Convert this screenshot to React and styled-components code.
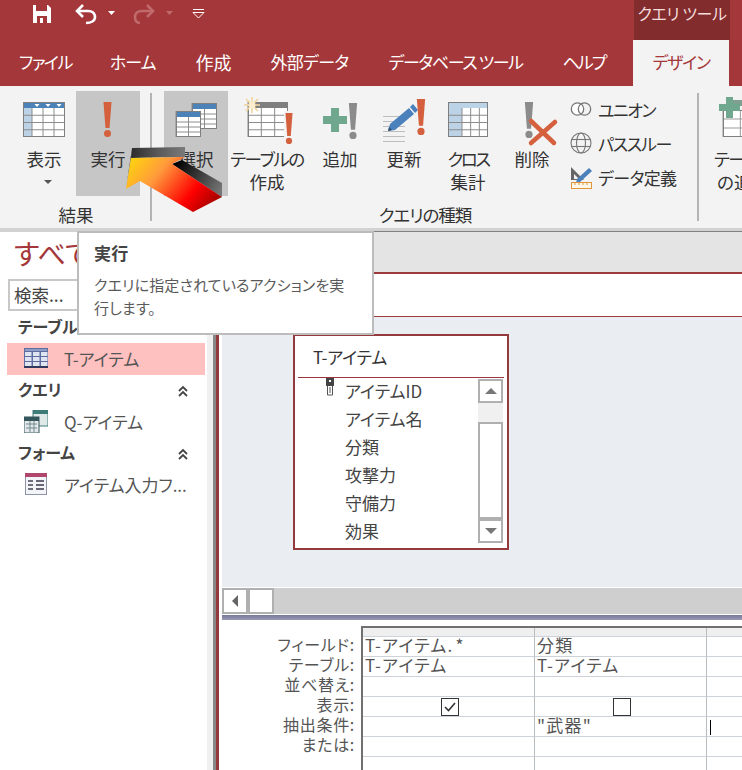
import styled, { createGlobalStyle } from "styled-components";

const RED = "#a4373a";
const ORANGE = "#d4603e";
const BLUE = "#4d82b8";
const PALE = "#bcd2e6";
const LINE = "#7f7f7f";

const GlobalStyle = createGlobalStyle`
  html, body { margin: 0; padding: 0; background: #fff; }
  body {
    font-family: "Noto Sans CJK JP", "Noto Sans", sans-serif;
    font-feature-settings: "palt";
    color: #333;
  }
`;

const Page = styled.div`
  position: relative;
  width: 742px;
  height: 770px;
  overflow: hidden;
`;

// kana in the original font runs narrower than Noto, so labels get tracked in
const Tight = styled.span`
  letter-spacing: ${(p) => p.$t}px;
`;

/* title + tabs */
const TitleBar = styled.div`
  display: flex;
  height: 40px;
  background: ${RED};
`;
const Qat = styled.div`
  display: flex;
  align-items: center;
  height: 27px;
  padding-left: 32px;
`;
const ContextHead = styled.div`
  margin-left: auto;
  margin-right: 12px;
  width: 96px;
  height: 40px;
  background: #832c2e;
  color: #f3dcdc;
  font-size: 16px;
  line-height: 26px;
  letter-spacing: -0.4px;
  text-align: center;
  white-space: nowrap;
`;
const TabRow = styled.div`
  display: flex;
  height: 46px;
  background: ${RED};
  white-space: nowrap;
`;
const Tab = styled.div`
  padding: 0 ${(p) => p.$pr || 20}px 0 ${(p) => p.$pl || 20}px;
  margin-left: ${(p) => p.$ml || 0}px;
  font-size: ${(p) => (p.$kanji ? 18 : 17)}px;
  letter-spacing: ${(p) => p.$t || 0}px;
  line-height: 44px;
  color: ${(p) => (p.$active ? RED : "#fff")};
  background: ${(p) => (p.$active ? "#f3f3f3" : "transparent")};
`;

/* ribbon */
const Ribbon = styled.div`
  display: flex;
  height: 137px;
  padding: 5px 0 0 12px;
  background: #f3f3f3;
  border-bottom: 4px solid #d2d2d2;
  overflow: hidden;
`;
const Group = styled.div`
  display: flex;
  flex-direction: column;
  flex: none;
`;
const GroupBody = styled.div`
  display: flex;
  height: 105px;
`;
const GroupLabel = styled.div`
  text-align: center;
  font-size: 17.5px;
  line-height: 24px;
  margin-top: 7px;
  padding-right: ${(p) => p.$shift || 0}px;
  letter-spacing: ${(p) => p.$t || 0}px;
  color: #333;
`;
const Separator = styled.div`
  flex: none;
  width: 2px;
  height: 128px;
  margin: 2px ${(p) => p.$right}px 0 ${(p) => p.$left}px;
  background: #b4b4b4;
`;
const RibbonButton = styled.div`
  flex: none;
  width: ${(p) => p.$w}px;
  background: ${(p) => (p.$on ? "#c6c6c6" : "transparent")};
  text-align: center;
  font-size: 17.5px;
  line-height: 23px;
  color: #333;
  white-space: nowrap;
  svg { display: block; }
`;
const SmallList = styled.div`
  display: flex;
  flex-direction: column;
  gap: 8px;
  margin-left: 8px;
  padding-top: 5px;
  width: 128px;
`;
const SmallItem = styled.div`
  display: flex;
  align-items: center;
  gap: 6px;
  height: 26px;
  font-size: 17px;
  color: #333;
  white-space: nowrap;
`;
const DropCaret = styled.div`
  width: 0;
  height: 0;
  margin: 10px 0 0 32px;
  border-left: 4px solid transparent;
  border-right: 4px solid transparent;
  border-top: 4px solid #555;
`;

/* main */
const Main = styled.div`
  display: flex;
  height: 538px;
`;
const NavPane = styled.div`
  flex: none;
  width: 207px;
  background: #fff;
`;
const NavTitle = styled.div`
  height: 47px;
  padding-left: 14px;
  font-size: 28px;
  line-height: 42px;
  color: ${RED};
`;
const SearchBox = styled.div`
  box-sizing: border-box;
  height: 32px;
  margin: 0 0 1px 8px;
  padding-left: 4px;
  border: 2px solid #c8c8c8;
  font-size: 17.5px;
  line-height: 27px;
  color: #444;
`;
const NavHeader = styled.div`
  display: flex;
  align-items: center;
  justify-content: space-between;
  box-sizing: border-box;
  height: 31px;
  padding: 0 18px 3px;
  font-size: 16px;
  font-weight: 700;
  color: #444;
`;
const Collapse = styled.svg`
  margin-top: 4px;
`;
const NavRow = styled.div`
  display: flex;
  align-items: center;
  gap: 16px;
  box-sizing: border-box;
  height: 32px;
  margin: 0 2px 0 7px;
  padding: 0 0 2px 17px;
  background: ${(p) => (p.$on ? "#ffc0c0" : "transparent")};
  font-size: 17px;
  color: #555;
  white-space: nowrap;
`;
const PaneEdge = styled.div`
  flex: none;
  width: 12px;
  box-sizing: border-box;
  background: #f0f0f0;
  border-right: 3px solid #943a3c;
  box-shadow: inset -3px 0 0 #888;
`;
const Designer = styled.div`
  flex: 1;
  display: flex;
  flex-direction: column;
  min-width: 0;
  background: #fff;
`;
const DocStrip = styled.div`
  height: 40px;
  background: #e4e4e4;
  border-top: 1px solid #808080;
  margin-top: -1px;
`;
const DocBar = styled.div`
  height: 42px;
  border-top: 2px solid #9c3b3d;
  border-bottom: 1px solid #9c3b3d;
`;
const Canvas = styled.div`
  height: 253px;
  margin-left: 3px;
  padding: 17px 0 0 71px;
  background: #eaedf1;
`;
const TableBox = styled.div`
  box-sizing: border-box;
  width: 216px;
  height: 216px;
  background: #fff;
  border: 2px solid #943a3c;
`;
const BoxTitle = styled.div`
  height: 42px;
  margin: 0 3px;
  padding-left: 15px;
  box-sizing: border-box;
  border-bottom: 1px solid #943a3c;
  font-size: 17px;
  letter-spacing: -0.2px;
  line-height: 41px;
  color: #333;
`;
const BoxBody = styled.div`
  display: flex;
  justify-content: space-between;
  padding: 1px 4px 0 0;
`;
const FieldList = styled.div`
  margin-top: -2px;
`;
const FieldRow = styled.div`
  display: flex;
  height: 28px;
  padding-left: 50px;
  font-size: 17px;
  line-height: 28px;
  color: #444;
  position: relative;
`;
const KeyMark = styled.svg`
  position: absolute;
  left: 31px;
  top: 1px;
`;
const VScroll = styled.div`
  display: flex;
  flex-direction: column;
  width: 25px;
  height: 164px;
`;
const ScrollCap = styled.div`
  box-sizing: border-box;
  height: ${(p) => p.$h}px;
  flex: none;
  background: #fff;
  border: 2px solid #b0b0b0;
  display: flex;
  align-items: center;
  justify-content: center;
`;
const ScrollTrack = styled.div`
  height: ${(p) => p.$h}px;
  flex: none;
  background: #f0f0f0;
`;
const TriUp = styled.div`
  width: 0;
  height: 0;
  border-left: 6px solid transparent;
  border-right: 6px solid transparent;
  border-bottom: 6px solid #777;
`;
const TriDown = styled(TriUp)`
  border-bottom: 0;
  border-top: 6px solid #777;
`;
const TriLeft = styled.div`
  width: 0;
  height: 0;
  border-top: 6px solid transparent;
  border-bottom: 6px solid transparent;
  border-right: 6px solid #666;
`;
const HScroll = styled.div`
  display: flex;
  box-sizing: border-box;
  height: 27px;
  margin-left: 3px;
  border-top: 1px solid #fff;
  background: #cfcfcf;
`;
const HScrollButtons = styled.div`
  display: flex;
  gap: 4px;
  box-sizing: border-box;
  height: 26px;
  padding: 2px;
  background: #b0b0b0;
`;
const HCap = styled.div`
  width: 22px;
  background: #fff;
  display: flex;
  align-items: center;
  justify-content: center;
`;
const Splitter = styled.div`
  height: 5px;
  margin: 1px 0 0 3px;
  background: linear-gradient(#77779a, #9a9ab4);
`;
const Lower = styled.div`
  display: flex;
  flex: 1;
  padding-top: 6px;
  overflow: hidden;
`;
const RowLabels = styled.div`
  flex: none;
  width: 136px;
  padding-top: 8px;
  text-align: right;
  font-size: 16px;
  letter-spacing: 0.7px;
  line-height: 20px;
  color: #555;
`;
const Grid = styled.div`
  margin-left: 6px;
  display: grid;
  grid-template-columns: 172px 172px 60px;
  grid-auto-rows: 20px;
  grid-template-rows: 9px;
  border-top: 2px solid #707070;
  border-left: 2px solid #707070;
`;
const Cell = styled.div`
  box-sizing: border-box;
  position: relative;
  border-right: 1px solid #b8bdc2;
  border-bottom: 1px solid #cdd3d9;
  padding-left: 2px;
  font-size: 17px;
  letter-spacing: 1.2px;
  line-height: 16px;
  color: #555;
  white-space: nowrap;
  background: ${(p) => (p.$head ? "#efefef" : "#fff")};
  display: ${(p) => (p.$center ? "flex" : "block")};
  align-items: center;
  justify-content: center;
`;
const CheckBox = styled.div`
  box-sizing: border-box;
  width: 18px;
  height: 18px;
  border: 1px solid #333;
  display: flex;
  align-items: center;
  justify-content: center;
`;
const Caret = styled.div`
  width: 1px;
  height: 15px;
  margin: 3px 0 0 1px;
  background: #000;
`;

/* overlays */
const Tooltip = styled.div`
  position: absolute;
  left: 77px;
  top: 231px;
  box-sizing: border-box;
  width: 297px;
  height: 104px;
  padding: 8px 15px;
  background: #fff;
  border: 2px solid #bcbcbc;
  font-size: 15px;
  letter-spacing: 0.15px;
  color: #5a5a5a;
  line-height: 23px;
  white-space: nowrap;
`;
const TipTitle = styled.div`
  font-size: 17px;
  font-weight: 700;
  color: #444;
  margin-bottom: 9px;
`;
const Arrow = styled.svg`
  position: absolute;
  left: 120px;
  top: 140px;
`;

const Bang = ({ x, y, h = 35, color = ORANGE }) => {
  const w = h * 0.23;
  const bar = h * 0.74;
  return (
    <>
      <polygon points={`${x - w / 2},${y} ${x + w / 2},${y} ${x + w / 4},${y + bar} ${x - w / 4},${y + bar}`} fill={color} />
      <circle cx={x} cy={y + h - h * 0.1} r={h * 0.1} fill={color} />
    </>
  );
};

const TableGlyph = ({ x, y, w, h, cols, rows, head = BLUE, side, sideW = 0, topH = 6, line = "#8c8c8c" }) => {
  const lines = [];
  const bodyY = y + topH;
  const colW = (w - sideW) / cols;
  const rowH = (h - topH) / rows;
  for (let i = 0; i < cols; i++) {
    lines.push(<line key={"c" + i} x1={x + sideW + colW * i} x2={x + sideW + colW * i} y1={y} y2={y + h} stroke={line} />);
  }
  for (let i = 1; i < rows; i++) {
    lines.push(<line key={"r" + i} x1={x} x2={x + w} y1={bodyY + rowH * i} y2={bodyY + rowH * i} stroke={line} />);
  }
  return (
    <>
      <rect x={x} y={y} width={w} height={h} fill="#fff" />
      {side && <rect x={x} y={bodyY} width={sideW} height={h - topH} fill={side} />}
      {lines}
      <rect x={x} y={y} width={w} height={topH} fill={head} />
      <rect x={x + 0.5} y={y + 0.5} width={w - 1} height={h - 1} fill="none" stroke={LINE} />
    </>
  );
};

const Icon = ({ w, children }) => (
  <svg width={w} height="56" viewBox={`0 0 ${w} 56`}>
    {children}
  </svg>
);

const Plus = ({ x, y, s, color = "#6fa88f" }) => (
  <path d={`M${x + s / 3} ${y}h${s / 3}v${s / 3}h${s / 3}v${s / 3}h${-s / 3}v${s / 3}h${-s / 3}v${-s / 3}h${-s / 3}v${-s / 3}h${s / 3}z`} fill={color} />
);

const ViewIcon = () => (
  <Icon w={64}>
    <TableGlyph x={11} y={11} w={42} h={35} cols={3} rows={4} side={PALE} sideW={9} />
    {[25, 36, 47].map((x) => (
      <polygon key={x} points={`${x - 2.5},13 ${x + 2.5},13 ${x},16`} fill="#fff" />
    ))}
  </Icon>
);
const SelectIcon = () => (
  <Icon w={64}>
    <TableGlyph x={28} y={12} w={25} h={26} cols={2} rows={4} />
    <TableGlyph x={12} y={20} w={25} h={26} cols={2} rows={4} />
  </Icon>
);
const MakeTableIcon = () => (
  <Icon w={78}>
    <TableGlyph x={20} y={11} w={40} h={35} cols={3} rows={4} head={LINE} />
    <g stroke="#f0d49c" strokeWidth="1.6">
      <line x1="24" y1="6" x2="24" y2="22" />
      <line x1="16" y1="14" x2="32" y2="14" />
      <line x1="18" y1="8" x2="30" y2="20" />
      <line x1="30" y1="8" x2="18" y2="20" />
    </g>
    <circle cx="24" cy="14" r="3.5" fill="#fbeccb" />
    <rect x="56" y="20" width="10" height="34" fill="#f3f3f3" />
    <Bang x={61} y={22} h={31} />
  </Icon>
);
const AddIcon = () => (
  <Icon w={68}>
    <Plus x={17} y={17} s={24} />
    <Bang x={47} y={12} h={36} color="#8b8b8b" />
  </Icon>
);
const UpdateIcon = () => (
  <Icon w={60}>
    <g stroke="#bdbdbd">
      {[25, 30, 35, 40, 45, 50].map((y) => (
        <line key={y} x1="9" x2="31" y1={y + 0.5} y2={y + 0.5} />
      ))}
    </g>
    <path d="M14 40 L16 33 L35 17 L40 23 L21 39 Z" fill="#4a80bb" />
    <path d="M36 16 L39 13 L44 19 L41 22 Z" fill="#4a80bb" />
    <path d="M14 40 L15 36 L18 39 Z" fill="#2d4f73" />
    <Bang x={47} y={8} h={36} />
  </Icon>
);
const CrossIcon = () => (
  <Icon w={68}>
    <TableGlyph x={14} y={11} w={40} h={35} cols={3} rows={4} head={PALE} side={PALE} sideW={14} />
  </Icon>
);
const DeleteIcon = () => (
  <Icon w={60}>
    <Bang x={27} y={11} h={36} color="#8b8b8b" />
    <path d="M29 30 L52 52 M53 31 L29 52" stroke={ORANGE} strokeWidth="4.5" strokeLinecap="round" fill="none" />
  </Icon>
);
const AddTableIcon = () => (
  <Icon w={64}>
    <TableGlyph x={12} y={19} w={52} h={27} cols={3} rows={3} head="#fff" line="#999" topH={0} />
    <rect x="22" y="9" width="40" height="6" fill="#7f9f90" />
    <Plus x={8} y={6} s={21} />
  </Icon>
);

const UnionIcon = () => (
  <svg width="22" height="18" viewBox="0 0 22 18" fill="#fff" stroke="#777" strokeWidth="1.3">
    <circle cx="7.5" cy="9" r="6.2" />
    <circle cx="14.5" cy="9" r="6.2" fill="none" />
  </svg>
);
const GlobeIcon = () => (
  <svg width="22" height="22" viewBox="0 0 22 22" fill="none" stroke="#777" strokeWidth="1.1">
    <circle cx="11" cy="11" r="10" />
    <ellipse cx="11" cy="11" rx="4.5" ry="10" />
    <line x1="1.5" y1="7.5" x2="20.5" y2="7.5" />
    <line x1="1.5" y1="14.5" x2="20.5" y2="14.5" />
  </svg>
);
const DefineIcon = () => (
  <svg width="22" height="23" viewBox="0 0 22 23">
    <path d="M1 1 L14 14 H1 Z" fill="#666" />
    <path d="M4 8 L9 13 H4 Z" fill="#f3f3f3" />
    <path d="M7 13 L19 2 L22 5 L10 16 L6 17 Z" fill="#4a80bb" />
    <rect x="1.5" y="16.5" width="20" height="6" fill="#fff8e8" stroke="#e2963c" />
    <path d="M5 17v2M9 17v2M13 17v2M17 17v2" stroke="#e2963c" />
  </svg>
);
const NavTableIcon = () => (
  <svg width="24" height="20" viewBox="0 0 24 20">
    <rect x="0" y="0" width="24" height="20" fill="#5c6da0" />
    <rect x="1" y="1" width="22" height="2" fill="#8f9cc4" />
    <g fill="#dfe4f0">
      {[4, 9, 14].map((y) =>
        [1, 9, 17].map((x) => <rect key={x + "-" + y} x={x} y={y} width="6.5" height="4" />)
      )}
    </g>
    <rect x="0" y="18" width="24" height="2" fill="#2f3a5c" />
  </svg>
);
const NavQueryIcon = () => (
  <svg width="24" height="23" viewBox="0 0 24 23">
    <rect x="9" y="0" width="15" height="16" fill="#dfe9e8" stroke="#3e7c78" />
    <rect x="9" y="0" width="15" height="4" fill="#3e7c78" />
    <rect x="0" y="7" width="15" height="16" fill="#e4e8ea" stroke="#34565c" />
    <rect x="0" y="7" width="15" height="4" fill="#34565c" />
    <path d="M2 14h11M2 18h11M6 11v11M10 11v11" stroke="#6f8b90" />
  </svg>
);
const NavFormIcon = () => (
  <svg width="24" height="22" viewBox="0 0 24 22">
    <rect x="1.5" y="0.5" width="21" height="21" fill="#f2f4f8" stroke="#8a93a8" />
    <rect x="1" y="0" width="22" height="4" fill="#b0466c" />
    <path d="M4 8h5M4 12h5M4 16h5" stroke="#445" strokeWidth="1.4" />
    <path d="M12 8h8M12 12h8M12 16h8" stroke="#667" strokeWidth="2.2" />
  </svg>
);
const Chevrons = () => (
  <Collapse width="12" height="13" viewBox="0 0 12 13" fill="none" stroke="#444" strokeWidth="1.8">
    <path d="M2 6 L6 2 L10 6" />
    <path d="M2 11 L6 7 L10 11" />
  </Collapse>
);

const fields = ["アイテムID", "アイテム名", "分類", "攻撃力", "守備力", "効果"];
const rowLabels = ["フィールド:", "テーブル:", "並べ替え:", "表示:", "抽出条件:", "または:"];

const App = () => {
  return (
    <Page>
      <GlobalStyle />
      <TitleBar>
        <Qat>
          <svg width="20" height="20" viewBox="0 0 20 20">
            <path d="M1 1h15l3 3v15H1z" fill="#fff" />
            <rect x="4" y="1" width="11" height="6" fill="#a4373a" />
            <rect x="5" y="12" width="10" height="7" fill="#a4373a" />
            <rect x="8" y="14" width="3" height="5" fill="#fff" />
          </svg>
          <svg width="24" height="22" viewBox="0 0 24 22" fill="none" stroke="#fff" strokeWidth="2.6" style={{ marginLeft: 22 }}>
            <path d="M9 2 L3 8 L9 14" />
            <path d="M3 8 H14 C20 8 21 12 21 14 C21 18 17 20 12 20" />
          </svg>
          <svg width="9" height="5" viewBox="0 0 9 5" fill="#fff" style={{ marginLeft: 9 }}>
            <path d="M1 0h7L4.5 4z" />
          </svg>
          <svg width="24" height="22" viewBox="0 0 24 22" fill="none" stroke="#c06a6c" strokeWidth="2.6" style={{ marginLeft: 16 }}>
            <path d="M15 2 L21 8 L15 14" />
            <path d="M21 8 H10 C4 8 3 12 3 14 C3 18 5 20 8 20" />
          </svg>
          <svg width="9" height="5" viewBox="0 0 9 5" fill="#c06a6c" style={{ marginLeft: 9 }}>
            <path d="M1 0h7L4.5 4z" />
          </svg>
          <svg width="13" height="10" viewBox="0 0 13 10" fill="none" stroke="#fff" style={{ marginLeft: 18 }}>
            <path d="M1 .5h11M1 3.5h11L6.5 9z" />
          </svg>
        </Qat>
        <ContextHead>クエリ ツール</ContextHead>
      </TitleBar>
      <TabRow>
        <Tab $pl={19} $pr={18} $t={-1.5}>ファイル</Tab>
        <Tab $t={-1}>ホーム</Tab>
        <Tab $pr={19} $kanji>作成</Tab>
        <Tab $t={-0.7}>外部データ</Tab>
        <Tab $t={-1.4}>データベース ツール</Tab>
        <Tab $t={-2}>ヘルプ</Tab>
        <Tab $active $ml={8} $pl={19} $pr={19} $t={-1.2}>デザイン</Tab>
      </TabRow>

      <Ribbon>
        <Group>
          <GroupBody>
            <RibbonButton $w={64}>
              <ViewIcon />
              表示
              <DropCaret />
            </RibbonButton>
            <RibbonButton $w={64} $on>
              <Icon w={64}>
                <Bang x={31.5} y={11} h={35} />
              </Icon>
              実行
            </RibbonButton>
          </GroupBody>
          <GroupLabel>結果</GroupLabel>
        </Group>
        <Separator $left={10} $right={12} />
        <Group>
          <GroupBody>
            <RibbonButton $w={64} $on>
              <SelectIcon />
              選択
            </RibbonButton>
            <RibbonButton $w={78}>
              <MakeTableIcon />
              <Tight $t={-1.4}>テーブルの</Tight>
              <br />
              作成
            </RibbonButton>
            <RibbonButton $w={68}>
              <AddIcon />
              追加
            </RibbonButton>
            <RibbonButton $w={60}>
              <UpdateIcon />
              更新
            </RibbonButton>
            <RibbonButton $w={68}>
              <CrossIcon />
              <Tight $t={-2.5}>クロス</Tight>
              <br />
              集計
            </RibbonButton>
            <RibbonButton $w={60}>
              <DeleteIcon />
              削除
            </RibbonButton>
            <SmallList>
              <SmallItem>
                <UnionIcon />
                <Tight $t={-1.5}>ユニオン</Tight>
              </SmallItem>
              <SmallItem>
                <GlobeIcon />
                <Tight $t={-1.2}>パススルー</Tight>
              </SmallItem>
              <SmallItem>
                <DefineIcon />
                <Tight $t={-0.6}>データ定義</Tight>
              </SmallItem>
            </SmallList>
          </GroupBody>
          <GroupLabel $shift={12} $t={-1}>クエリの種類</GroupLabel>
        </Group>
        <Separator $left={-1} $right={12} />
        <Group>
          <GroupBody>
            <RibbonButton $w={64}>
              <AddTableIcon />
              <Tight $t={-1.4}>テーブル</Tight>
              <br />
              の追加
            </RibbonButton>
          </GroupBody>
        </Group>
      </Ribbon>

      <Main>
        <NavPane>
          <NavTitle>すべて</NavTitle>
          <SearchBox>検索...</SearchBox>
          <NavHeader>テーブル</NavHeader>
          <NavRow $on>
            <NavTableIcon />
            T-アイテム
          </NavRow>
          <NavHeader>
            クエリ
            <Chevrons />
          </NavHeader>
          <NavRow>
            <NavQueryIcon />
            Q-アイテム
          </NavRow>
          <NavHeader>
            フォーム
            <Chevrons />
          </NavHeader>
          <NavRow>
            <NavFormIcon />
            アイテム入力フ...
          </NavRow>
        </NavPane>
        <PaneEdge />
        <Designer>
          <DocStrip />
          <DocBar />
          <Canvas>
            <TableBox>
              <BoxTitle>T-アイテム</BoxTitle>
              <BoxBody>
                <FieldList>
                  {fields.map((name, i) => (
                    <FieldRow key={name}>
                      {i === 0 && (
                        <KeyMark width="9" height="18" viewBox="0 0 9 18">
                          <rect x="0" y="0" width="8" height="8" fill="#444" />
                          <rect x="3" y="2" width="2" height="2" fill="#fff" />
                          <path d="M1.5 8v9h5V8M4 9v6" fill="none" stroke="#555" />
                        </KeyMark>
                      )}
                      {name}
                    </FieldRow>
                  ))}
                </FieldList>
                <VScroll>
                  <ScrollCap $h={24}>
                    <TriUp />
                  </ScrollCap>
                  <ScrollTrack $h={19} />
                  <ScrollCap $h={97} />
                  <ScrollCap $h={24}>
                    <TriDown />
                  </ScrollCap>
                </VScroll>
              </BoxBody>
            </TableBox>
          </Canvas>
          <HScroll>
            <HScrollButtons>
              <HCap>
                <TriLeft />
              </HCap>
              <HCap />
            </HScrollButtons>
          </HScroll>
          <Splitter />
          <Lower>
            <RowLabels>
              {rowLabels.map((label) => (
                <div key={label}>{label}</div>
              ))}
            </RowLabels>
            <Grid>
              <Cell $head />
              <Cell $head />
              <Cell $head />
              <Cell>T-アイテム<Tight $t={6}>.*</Tight></Cell>
              <Cell>分類</Cell>
              <Cell />
              <Cell>T-アイテム</Cell>
              <Cell>T-アイテム</Cell>
              <Cell />
              <Cell />
              <Cell />
              <Cell />
              <Cell $center>
                <CheckBox>
                  <svg width="12" height="10" viewBox="0 0 12 10" fill="none" stroke="#333" strokeWidth="1.6">
                    <path d="M1 5 L4.5 8.5 L11 1" />
                  </svg>
                </CheckBox>
              </Cell>
              <Cell $center>
                <CheckBox />
              </Cell>
              <Cell />
              <Cell />
              <Cell>"武器"</Cell>
              <Cell>
                <Caret />
              </Cell>
              <Cell />
              <Cell />
              <Cell />
              <Cell />
              <Cell />
              <Cell />
            </Grid>
          </Lower>
        </Designer>
      </Main>

      <Tooltip>
        <TipTitle>実行</TipTitle>
        クエリに指定されているアクションを実
        <br />
        行します。
      </Tooltip>

      <Arrow width="110" height="80" viewBox="120 140 110 80">
        <defs>
          <linearGradient id="arrowFace" gradientUnits="userSpaceOnUse" x1="130" y1="155" x2="205" y2="215">
            <stop offset="0" stopColor="#ffd90a" />
            <stop offset="0.35" stopColor="#ff9a3c" />
            <stop offset="0.75" stopColor="#ff0000" />
            <stop offset="1" stopColor="#a80000" />
          </linearGradient>
          <linearGradient id="arrowTop" gradientUnits="userSpaceOnUse" x1="132" y1="150" x2="185" y2="150">
            <stop offset="0" stopColor="#2e2e2e" />
            <stop offset="0.5" stopColor="#5a5a5a" />
            <stop offset="1" stopColor="#7a7a7a" />
          </linearGradient>
          <linearGradient id="arrowSide" gradientUnits="userSpaceOnUse" x1="175" y1="165" x2="222" y2="190">
            <stop offset="0" stopColor="#000" />
            <stop offset="1" stopColor="#777" />
          </linearGradient>
        </defs>
        <polygon points="132,148 185,147 185,157 131,158" fill="url(#arrowTop)" />
        <polygon points="132,148 126,189 131,158" fill="#222" />
        <polygon points="172,164 182,160 222,183 222,197" fill="url(#arrowSide)" />
        <polygon points="131,158 185,157 172,164 222,197 193,212 140,181 126,189" fill="url(#arrowFace)" />
      </Arrow>
    </Page>
  );
};

export default App;
